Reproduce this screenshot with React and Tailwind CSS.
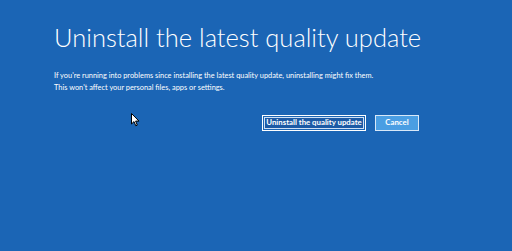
export default function App() {
  return (
    <div className="relative w-[512px] h-[251px] bg-[#1b65b5] overflow-hidden" style={{ fontFamily: 'Lato, "Noto Sans", sans-serif' }}>
      <div className="pl-[54px] pt-[21px] w-[420px]">
        <h1 className="text-[25.5px] leading-[32px] font-light text-white whitespace-nowrap">Uninstall the latest quality update</h1>
        <div className="mt-[17px] text-[7.4px] leading-[12px] text-white whitespace-nowrap">
          <p>If you're running into problems since installing the latest quality update, uninstalling might fix them.</p>
          <p>This won't affect your personal files, apps or settings.</p>
        </div>
        <div className="mt-[21px] flex justify-end gap-[9px] w-[365px]">
          <button className="w-[104px] h-[16px] border border-white p-px">
            <span className="flex items-center justify-center w-full h-full border border-[#cfe0f5] bg-[#1d5aa5] text-white text-[7.8px] font-bold leading-none whitespace-nowrap">Uninstall the quality update</span>
          </button>
          <button className="w-[44px] h-[16px] border border-[#d8e8f8] bg-[#4a9ee3] flex items-center justify-center text-white text-[7.8px] font-bold leading-none">Cancel</button>
        </div>
      </div>
      <svg className="absolute left-[131px] top-[113px]" width="9" height="14" viewBox="0 0 9 14">
        <path d="M0.5 0.5 L0.5 11 L3 8.6 L4.8 12.8 L6.3 12.1 L4.6 8.1 L8 8.1 Z" fill="#ffffff" stroke="#000000" strokeWidth="1" strokeLinejoin="round" />
      </svg>
    </div>
  );
}
